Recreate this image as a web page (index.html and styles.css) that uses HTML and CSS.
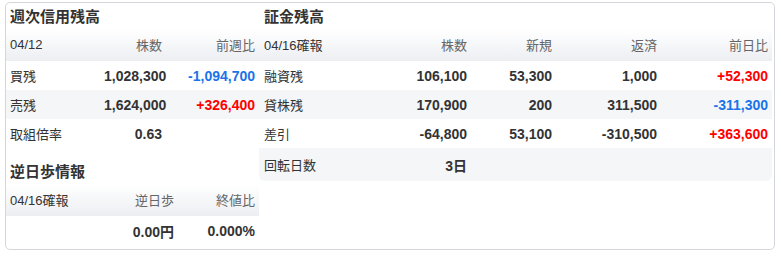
FILE: index.html
```html
<!DOCTYPE html>
<html lang="ja">
<head>
<meta charset="utf-8">
<link rel="stylesheet" href="styles.css">
</head>
<body>
<div class="panel">
  <div class="col-left">
    <h2 class="title">週次信用残高</h2>
    <div class="tbl tbl-weekly">
      <div class="row head"><span class="lbl dark">04/12</span><span>株数</span><span>前週比</span></div>
      <div class="row"><span class="lbl">買残</span><span class="num">1,028,300</span><span class="num blue">-1,094,700</span></div>
      <div class="row alt"><span class="lbl">売残</span><span class="num">1,624,000</span><span class="num red">+326,400</span></div>
      <div class="row"><span class="lbl">取組倍率</span><span class="num">0.63</span><span></span></div>
    </div>
    <h2 class="title title-2">逆日歩情報</h2>
    <div class="tbl tbl-gyaku">
      <div class="row head"><span class="lbl dark">04/16確報</span><span>逆日歩</span><span>終値比</span></div>
      <div class="row"><span class="lbl"></span><span class="num">0.00円</span><span class="num">0.000%</span></div>
    </div>
  </div>
  <div class="col-right">
    <h2 class="title">証金残高</h2>
    <div class="tbl tbl-shokin">
      <div class="row head"><span class="lbl dark">04/16確報</span><span>株数</span><span>新規</span><span>返済</span><span>前日比</span></div>
      <div class="row"><span class="lbl">融資残</span><span class="num">106,100</span><span class="num">53,300</span><span class="num">1,000</span><span class="num red">+52,300</span></div>
      <div class="row alt"><span class="lbl">貸株残</span><span class="num">170,900</span><span class="num">200</span><span class="num">311,500</span><span class="num blue">-311,300</span></div>
      <div class="row"><span class="lbl">差引</span><span class="num">-64,800</span><span class="num">53,100</span><span class="num">-310,500</span><span class="num red">+363,600</span></div>
      <div class="row alt last"><span class="lbl">回転日数</span><span class="num">3日</span><span></span><span></span><span></span></div>
    </div>
  </div>
</div>
</body>
</html>
```
FILE: styles.css
```css
* { box-sizing: border-box; }
body {
  margin: 0;
  background: #fff;
  font-family: "Liberation Sans", "Noto Sans CJK JP", sans-serif;
  font-size: 13px;
  color: #333;
}
.panel {
  margin: 2px 0 0 5px;
  width: 770px;
  height: 248px;
  border: 1px solid #d3d7dc;
  border-radius: 5px;
  display: flex;
  padding-right: 2px;
}
.col-left { width: 253px; flex: none; }
.col-right { width: 513px; flex: none; }
.title {
  margin: 0;
  height: 27px;
  padding: 4px 0 0 4px;
  font-size: 15px;
  font-weight: bold;
  line-height: 20px;
  color: #333;
}
.col-right .title { padding-left: 5px; }
.title-2 { height: 37px; padding-top: 14px; }
.tbl .row {
  display: grid;
  height: 29px;
  align-items: center;
}
.tbl .row > span {
  padding: 0 4px;
  text-align: right;
  white-space: nowrap;
}
.tbl .row > span.lbl { text-align: left; }
.tbl .row.head {
  height: 31px;
  background: linear-gradient(#ffffff, #eceef2);
  color: #666;
  padding-bottom: 2px;
}
.tbl .row.alt { background: #f5f6f8; }
.tbl .row.last { height: 33px; border-radius: 0 0 6px 6px; }
.dark { color: #333; }
.num { font-weight: bold; font-size: 14px; }
.red { color: #ff0000; }
.blue { color: #1a73e8; }
.tbl-weekly .row { grid-template-columns: 94px 66px 93px; }
.tbl-gyaku .row { grid-template-columns: 80px 92px 81px; }
.tbl-shokin .row { grid-template-columns: 132px 80px 85px 105px 111px; }
.tbl-shokin .row > span.lbl { padding-left: 5px; }
```
